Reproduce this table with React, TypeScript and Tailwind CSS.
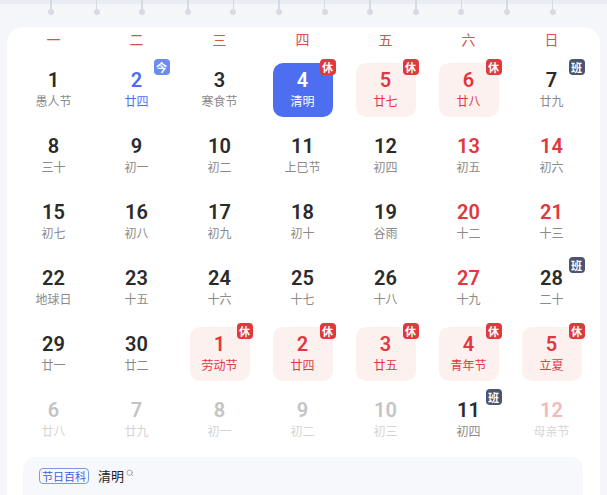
import { Search } from "lucide-react";

type Kind = "normal" | "weekend" | "holiday" | "today" | "selected" | "faded" | "fadedRed";

interface Day {
  d: number;
  lunar: string;
  kind?: Kind;
  badge?: "休" | "班" | "今";
}

const weeks: Day[][] = [
  [
    { d: 1, lunar: "愚人节" },
    { d: 2, lunar: "廿四", kind: "today", badge: "今" },
    { d: 3, lunar: "寒食节" },
    { d: 4, lunar: "清明", kind: "selected", badge: "休" },
    { d: 5, lunar: "廿七", kind: "holiday", badge: "休" },
    { d: 6, lunar: "廿八", kind: "holiday", badge: "休" },
    { d: 7, lunar: "廿九", badge: "班" },
  ],
  [
    { d: 8, lunar: "三十" },
    { d: 9, lunar: "初一" },
    { d: 10, lunar: "初二" },
    { d: 11, lunar: "上巳节" },
    { d: 12, lunar: "初四" },
    { d: 13, lunar: "初五", kind: "weekend" },
    { d: 14, lunar: "初六", kind: "weekend" },
  ],
  [
    { d: 15, lunar: "初七" },
    { d: 16, lunar: "初八" },
    { d: 17, lunar: "初九" },
    { d: 18, lunar: "初十" },
    { d: 19, lunar: "谷雨" },
    { d: 20, lunar: "十二", kind: "weekend" },
    { d: 21, lunar: "十三", kind: "weekend" },
  ],
  [
    { d: 22, lunar: "地球日" },
    { d: 23, lunar: "十五" },
    { d: 24, lunar: "十六" },
    { d: 25, lunar: "十七" },
    { d: 26, lunar: "十八" },
    { d: 27, lunar: "十九", kind: "weekend" },
    { d: 28, lunar: "二十", badge: "班" },
  ],
  [
    { d: 29, lunar: "廿一" },
    { d: 30, lunar: "廿二" },
    { d: 1, lunar: "劳动节", kind: "holiday", badge: "休" },
    { d: 2, lunar: "廿四", kind: "holiday", badge: "休" },
    { d: 3, lunar: "廿五", kind: "holiday", badge: "休" },
    { d: 4, lunar: "青年节", kind: "holiday", badge: "休" },
    { d: 5, lunar: "立夏", kind: "holiday", badge: "休" },
  ],
  [
    { d: 6, lunar: "廿八", kind: "faded" },
    { d: 7, lunar: "廿九", kind: "faded" },
    { d: 8, lunar: "初一", kind: "faded" },
    { d: 9, lunar: "初二", kind: "faded" },
    { d: 10, lunar: "初三", kind: "faded" },
    { d: 11, lunar: "初四", badge: "班" },
    { d: 12, lunar: "母亲节", kind: "fadedRed" },
  ],
];

const weekdays = ["一", "二", "三", "四", "五", "六", "日"];

const cellStyles: Record<Kind, { box: string; num: string; lunar: string }> = {
  normal: { box: "", num: "text-[#2b2b2b]", lunar: "text-[#8a8a8a]" },
  weekend: { box: "", num: "text-[#e0383e]", lunar: "text-[#8a8a8a]" },
  holiday: { box: "bg-[#fdf1f0]", num: "text-[#e0383e]", lunar: "text-[#e0383e]" },
  today: { box: "", num: "text-[#4e6ef2]", lunar: "text-[#4e6ef2]" },
  selected: { box: "bg-[#4e6ef2]", num: "text-white", lunar: "text-white" },
  faded: { box: "", num: "text-[#c4c4c4]", lunar: "text-[#d4d4d4]" },
  fadedRed: { box: "", num: "text-[#f3b8b8]", lunar: "text-[#d6d6d6]" },
};

const badgeStyles = {
  休: "bg-[#e0383e]",
  班: "bg-[#4b5470]",
  今: "bg-[#6b8cf3]",
};

function DayCell({ day }: { day: Day }) {
  const s = cellStyles[day.kind ?? "normal"];
  return (
    <div className="flex justify-center">
      <div className={`relative w-[60px] h-[54px] rounded-[10px] flex flex-col items-center pt-[6px] ${s.box}`}>
        <span
          className={`text-[20px] leading-[23px] font-semibold ${s.num}`}
          style={{ fontFamily: "Roboto, 'DejaVu Sans', sans-serif" }}
        >
          {day.d}
        </span>
        <span className={`text-[12px] leading-[17px] ${s.lunar}`}>{day.lunar}</span>
        {day.badge && (
          <span
            className={`absolute -top-[4px] -right-[3px] w-[16px] h-[16px] rounded-[4px] flex items-center justify-center text-white text-[11px] leading-none font-bold ${badgeStyles[day.badge]}`}
          >
            {day.badge}
          </span>
        )}
      </div>
    </div>
  );
}

export default function App() {
  return (
    <div
      className="relative w-[607px] h-[495px] overflow-hidden bg-[#f5f6f9]"
      style={{ fontFamily: "'Noto Sans CJK SC', sans-serif" }}
    >
      <div className="h-[4px] bg-[#e9ecf3]"></div>

      {/* Card */}
      <div className="ml-[7px] w-[593px] h-[491px] bg-white rounded-t-[16px] pl-[5px] pr-[7px]">
        <div className="h-[24px] mt-[23px] grid grid-cols-7">
          {weekdays.map((w) => (
            <div key={w} className="flex items-center justify-center text-[14px] text-[#d9504d]">
              {w}
            </div>
          ))}
        </div>

        <div className="mt-[12px] grid grid-cols-7 gap-y-[12px]">
          {weeks.flat().map((day, i) => (
            <DayCell key={i} day={day} />
          ))}
        </div>

        {/* Bottom panel */}
        <div className="mt-[10px] ml-[11px] w-[560px] h-[60px] bg-[#f7f8fc] rounded-t-[12px] flex items-start pt-[11px] pl-[16px]">
          <span className="h-[16px] px-[2px] flex items-center border border-[#7f97ea] rounded-[4px] text-[11px] leading-none text-[#3d5ee0]">
            节日百科
          </span>
          <span className="ml-[9px] text-[13px] leading-[16px] text-[#222]">清明</span>
          <Search size={8} strokeWidth={2.5} className="ml-[2px] mt-[1px] text-[#9a9a9a]" />
        </div>
      </div>

      {/* Binder pins */}
      <div className="absolute top-0 left-[48px] flex gap-[39.6px]">
        {Array.from({ length: 12 }).map((_, i) => (
          <div key={i} className="w-[6px] flex flex-col items-center">
            <div className="w-[1.5px] h-[11px] bg-[#d6dae3]"></div>
            <div className="w-[6px] h-[6px] -mt-[2px] rounded-full bg-[#d6dae3]"></div>
          </div>
        ))}
      </div>
    </div>
  );
}
